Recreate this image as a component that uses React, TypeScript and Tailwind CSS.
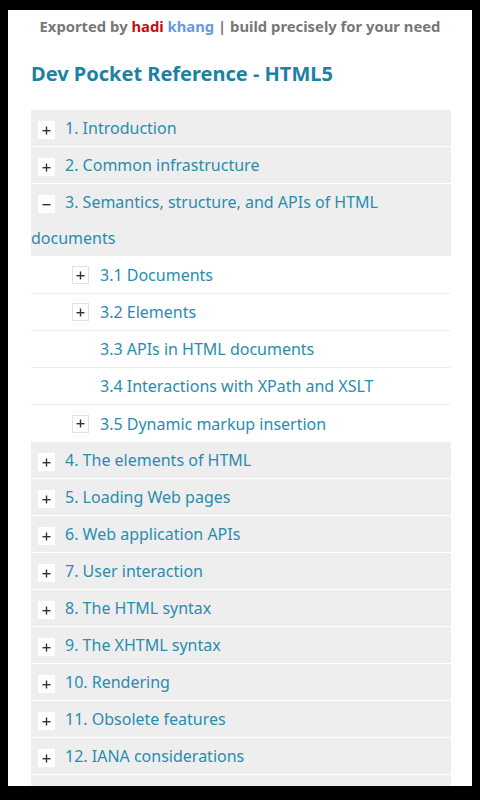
import React from 'react';

type Item = { label: string; state?: 'plus' | 'minus' | 'none' };

const topItems: Item[] = [
  { label: '1. Introduction', state: 'plus' },
  { label: '2. Common infrastructure', state: 'plus' },
];

const subItems: Item[] = [
  { label: '3.1 Documents', state: 'plus' },
  { label: '3.2 Elements', state: 'plus' },
  { label: '3.3 APIs in HTML documents', state: 'none' },
  { label: '3.4 Interactions with XPath and XSLT', state: 'none' },
  { label: '3.5 Dynamic markup insertion', state: 'plus' },
];

const restItems: Item[] = [
  { label: '4. The elements of HTML' },
  { label: '5. Loading Web pages' },
  { label: '6. Web application APIs' },
  { label: '7. User interaction' },
  { label: '8. The HTML syntax' },
  { label: '9. The XHTML syntax' },
  { label: '10. Rendering' },
  { label: '11. Obsolete features' },
  { label: '12. IANA considerations' },
];

function Toggle({ minus, bordered }: { minus?: boolean; bordered?: boolean }) {
  return (
    <span
      className={`inline-flex h-[18px] w-[17px] items-center justify-center bg-white align-middle ${
        bordered ? 'border border-[#e2e2e2]' : ''
      }`}
    >
      <svg width="9" height="9" viewBox="0 0 9 9">
        <rect x="0.5" y="4" width="8" height="1.4" fill="#333" />
        {!minus && <rect x="3.8" y="0.5" width="1.4" height="8" fill="#333" />}
      </svg>
    </span>
  );
}

function TopRow({ item, minus }: { item: Item; minus?: boolean }) {
  return (
    <div className="mb-[1px] bg-[#eeeeee] text-[16px] leading-[36px] text-[#2a8cae]">
      <span className="ml-[7px] mr-[10px] inline-block align-middle leading-none">
        <Toggle minus={minus} />
      </span>
      {item.label}
    </div>
  );
}

export default function App() {
  return (
    <div
      className="h-[800px] w-[480px] bg-black pb-[14px] pl-[8px] pr-[8px] pt-[10px]"
      style={{ fontFamily: '"Noto Sans", "Open Sans", sans-serif' }}
    >
      <div className="h-full overflow-hidden bg-white">
        <p className="pt-[6px] text-center text-[14.8px] font-bold leading-[20px] text-[#777777]">
          Exported by <span className="text-[#c40d0d]">hadi</span>{' '}
          <span className="text-[#6b98dc]">khang</span> | build precisely for your need
        </p>

        <h1 className="mt-[23px] pl-[23px] text-[20px] font-bold leading-[30px] text-[#1b82a3]">
          Dev Pocket Reference - HTML5
        </h1>

        {/* Table of contents */}
        <div className="ml-[23px] mr-[21px] mt-[21px]">
          {topItems.map((it) => (
            <TopRow key={it.label} item={it} />
          ))}
          <TopRow item={{ label: '3. Semantics, structure, and APIs of HTML documents' }} minus />

          <div>
            {subItems.map((it, i) => (
              <div
                key={it.label}
                className={`flex h-[37px] items-center text-[16px] text-[#2a8cae] ${
                  i < subItems.length - 1 ? 'border-b border-[#eeeeee]' : ''
                }`}
              >
                <span className="ml-[40px] mr-[10px] flex w-[19px] justify-center">
                  {it.state === 'plus' && <Toggle bordered />}
                </span>
                {it.label}
              </div>
            ))}
          </div>

          {restItems.map((it) => (
            <TopRow key={it.label} item={it} />
          ))}
          <div className="h-[36px] bg-[#eeeeee]" />
        </div>
      </div>
    </div>
  );
}
